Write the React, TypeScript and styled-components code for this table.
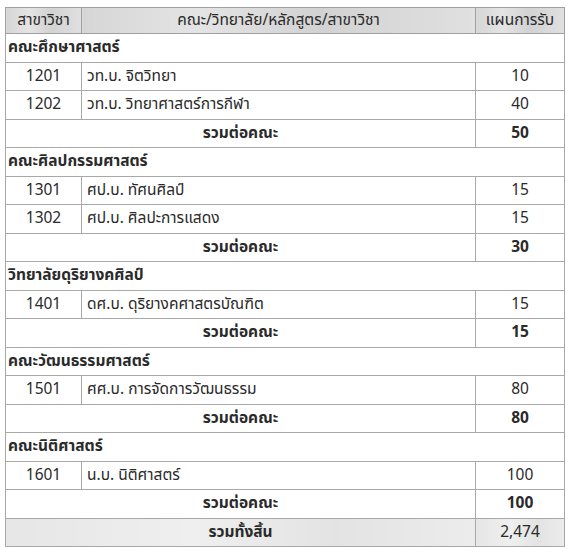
import React from 'react';
import styled, { createGlobalStyle } from 'styled-components';

type Item = { code: string; name: string; seats: number };
type Faculty = { title: string; items: Item[]; total: number };

const faculties: Faculty[] = [
  {
    title: 'คณะศึกษาศาสตร์',
    items: [
      { code: '1201', name: 'วท.บ. จิตวิทยา', seats: 10 },
      { code: '1202', name: 'วท.บ. วิทยาศาสตร์การกีฬา', seats: 40 },
    ],
    total: 50,
  },
  {
    title: 'คณะศิลปกรรมศาสตร์',
    items: [
      { code: '1301', name: 'ศป.บ. ทัศนศิลป์', seats: 15 },
      { code: '1302', name: 'ศป.บ. ศิลปะการแสดง', seats: 15 },
    ],
    total: 30,
  },
  {
    title: 'วิทยาลัยดุริยางคศิลป์',
    items: [{ code: '1401', name: 'ดศ.บ. ดุริยางคศาสตรบัณฑิต', seats: 15 }],
    total: 15,
  },
  {
    title: 'คณะวัฒนธรรมศาสตร์',
    items: [{ code: '1501', name: 'ศศ.บ. การจัดการวัฒนธรรม', seats: 80 }],
    total: 80,
  },
  {
    title: 'คณะนิติศาสตร์',
    items: [{ code: '1601', name: 'น.บ. นิติศาสตร์', seats: 100 }],
    total: 100,
  },
];

const GlobalStyle = createGlobalStyle`
  body {
    margin: 0;
    background: #ffffff;
    font-family: Tahoma, "Noto Sans Thai", "Noto Sans", "DejaVu Sans", sans-serif;
  }
`;

const Page = styled.div`
  padding: 7px 0 0 5px;
`;

const Table = styled.table`
  width: 559px;
  border-collapse: collapse;
  table-layout: fixed;
  color: #2a2a2a;
  font-size: 15.5px;
  border: 1px solid #9a9a9a;
`;

const HeadCell = styled.th`
  height: 25px;
  padding: 0;
  font-weight: normal;
  text-align: center;
  background: linear-gradient(90deg, #d6d6d6, #e4e4e4 30%, #d2d2d2 60%, #e0e0e0);
  border: 1px solid #a0a0a0;
`;

const Row = styled.tr`
  height: 28.5px;
`;

const Cell = styled.td<{ $align?: 'left' | 'center'; $bold?: boolean; $shade?: boolean }>`
  padding: 0 5px;
  text-align: ${(p) => p.$align ?? 'left'};
  font-weight: ${(p) => (p.$bold ? 'bold' : 'normal')};
  background: ${(p) => (p.$shade ? 'linear-gradient(90deg, #e6e6e6, #efefef 40%, #e3e3e3 70%, #ececec)' : 'transparent')};
  border: 1px solid #a8a8a8;
  white-space: nowrap;
`;

const SectionCell = styled(Cell)`
  padding-left: 2px;
  font-weight: bold;
`;

const App: React.FC = () => {
  return (
    <Page>
      <GlobalStyle />
      <Table>
        <colgroup>
          <col style={{ width: 76 }} />
          <col style={{ width: 394 }} />
          <col style={{ width: 89 }} />
        </colgroup>
        <thead>
          <tr>
            <HeadCell>สาขาวิชา</HeadCell>
            <HeadCell>คณะ/วิทยาลัย/หลักสูตร/สาขาวิชา</HeadCell>
            <HeadCell>แผนการรับ</HeadCell>
          </tr>
        </thead>
        <tbody>
          {faculties.map((f) => (
            <React.Fragment key={f.title}>
              <Row>
                <SectionCell colSpan={3}>{f.title}</SectionCell>
              </Row>
              {f.items.map((it) => (
                <Row key={it.code}>
                  <Cell $align="center">{it.code}</Cell>
                  <Cell>{it.name}</Cell>
                  <Cell $align="center">{it.seats}</Cell>
                </Row>
              ))}
              <Row>
                <Cell colSpan={2} $align="center" $bold>
                  รวมต่อคณะ
                </Cell>
                <Cell $align="center" $bold>
                  {f.total}
                </Cell>
              </Row>
            </React.Fragment>
          ))}
          <Row>
            <Cell colSpan={2} $align="center" $bold $shade>
              รวมทั้งสิ้น
            </Cell>
            <Cell $align="center" $shade>
              2,474
            </Cell>
          </Row>
        </tbody>
      </Table>
    </Page>
  );
};

export default App;
